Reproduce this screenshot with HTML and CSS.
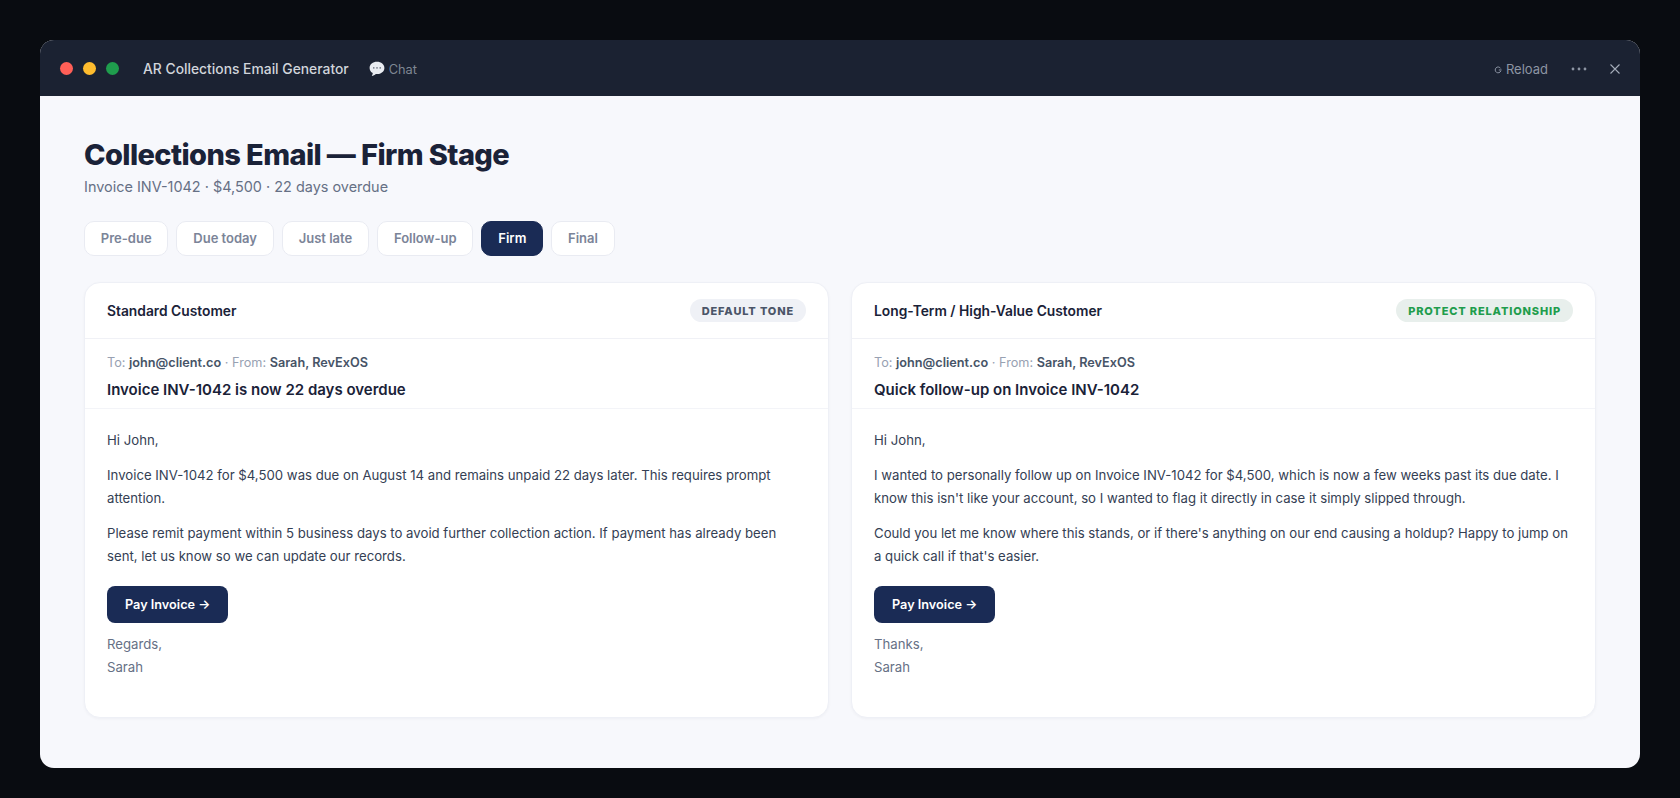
FILE: index.html
```html
<!DOCTYPE html>
<html lang="en">
<head>
<meta charset="utf-8">
<title>AR Collections Email Generator</title>
<link rel="stylesheet" href="styles.css">
</head>
<body>
<div class="window">
  <header class="titlebar">
    <div class="lights"><span class="light red"></span><span class="light yellow"></span><span class="light green"></span></div>
    <span class="app-title">AR Collections Email Generator</span>
    <span class="chat">
      <svg class="chat-icon" viewBox="0 0 16 16" aria-hidden="true"><path d="M8 .8C3.8.8.6 3.3.6 6.900c0 2.200 1.200 4 3.200 5.100-.1 1-.5 2.100-1 2.900 1.500-.2 3-1 4-2 .4.100.8.100 1.200.100 4.200 0 7.400-2.600 7.400-6.100S12.200.8 8 .8z" fill="#e9ecf1"/><circle cx="4.800" cy="6.900" r=".8" fill="#6b7280"/><circle cx="8" cy="6.900" r=".8" fill="#6b7280"/><circle cx="11.200" cy="6.900" r=".8" fill="#6b7280"/></svg>
      Chat
    </span>
    <div class="bar-actions">
      <span class="reload">
        <svg class="reload-icon" viewBox="0 0 8 8" aria-hidden="true"><path d="M6.600 2.400A2.900 2.900 0 1 0 6.800 5" fill="none" stroke="#9aa3b2" stroke-width=".9"/><path d="M4.800 4h2.800" stroke="#9aa3b2" stroke-width=".9"/></svg>
        Reload
      </span>
      <svg class="more-icon" viewBox="0 0 16 4" aria-hidden="true"><circle cx="2" cy="2" r="1.400"/><circle cx="8" cy="2" r="1.400"/><circle cx="14" cy="2" r="1.400"/></svg>
      <svg class="close-icon" viewBox="0 0 10 10" aria-hidden="true"><path d="M.5.500l9 9M9.500.500l-9 9"/></svg>
    </div>
  </header>
  <main class="content">
    <h1 class="page-title">Collections Email — Firm Stage</h1>
    <p class="page-sub">Invoice INV-1042 · $4,500 · 22 days overdue</p>
    <nav class="tabs">
      <button class="tab">Pre-due</button>
      <button class="tab">Due today</button>
      <button class="tab">Just late</button>
      <button class="tab">Follow-up</button>
      <button class="tab active">Firm</button>
      <button class="tab">Final</button>
    </nav>
    <section class="cards">
      <article class="card">
        <div class="card-head">
          <span class="card-title">Standard Customer</span>
          <span class="badge badge-grey">DEFAULT TONE</span>
        </div>
        <div class="meta">
          <div class="meta-line">To: <b>john@client.co</b> · From: <b>Sarah, RevExOS</b></div>
          <div class="subject">Invoice INV-1042 is now 22 days overdue</div>
        </div>
        <div class="body">
          <p>Hi John,</p>
          <p>Invoice INV-1042 for $4,500 was due on August 14 and remains unpaid 22 days later. This requires prompt attention.</p>
          <p>Please remit payment within 5 business days to avoid further collection action. If payment has already been sent, let us know so we can update our records.</p>
          <a class="pay">Pay Invoice →</a>
          <div class="sign">Regards,<br>Sarah</div>
        </div>
      </article>
      <article class="card">
        <div class="card-head">
          <span class="card-title">Long-Term / High-Value Customer</span>
          <span class="badge badge-green">PROTECT RELATIONSHIP</span>
        </div>
        <div class="meta">
          <div class="meta-line">To: <b>john@client.co</b> · From: <b>Sarah, RevExOS</b></div>
          <div class="subject">Quick follow-up on Invoice INV-1042</div>
        </div>
        <div class="body">
          <p>Hi John,</p>
          <p>I wanted to personally follow up on Invoice INV-1042 for $4,500, which is now a few weeks past its due date. I know this isn't like your account, so I wanted to flag it directly in case it simply slipped through.</p>
          <p>Could you let me know where this stands, or if there's anything on our end causing a holdup? Happy to jump on a quick call if that's easier.</p>
          <a class="pay">Pay Invoice →</a>
          <div class="sign">Thanks,<br>Sarah</div>
        </div>
      </article>
    </section>
  </main>
</div>
</body>
</html>
```
FILE: styles.css
```css
* { box-sizing: border-box; }
html, body { margin: 0; height: 100%; }
body {
  background: #090c11;
  font-family: Inter, "Liberation Sans", sans-serif;
  padding: 40px 40px 30px;
  overflow: hidden;
}
.window {
  height: 728px;
  border-radius: 14px;
  overflow: hidden;
  background: #f7f8fc;
  display: flex;
  flex-direction: column;
}
.titlebar {
  height: 56px;
  flex: none;
  background: #1b2232;
  display: flex;
  align-items: center;
  padding: 2px 20px 0;
}
.lights { display: flex; gap: 10px; margin: -2px 24px 0 0; }
.light { width: 13px; height: 13px; border-radius: 50%; }
.red { background: #ff5f57; }
.yellow { background: #febc2e; }
.green { background: #1f9d4d; }
.app-title { color: #d1d5db; font-size: 13.850px; font-weight: 500; margin-right: 20px; }
.chat { color: #7f8794; font-size: 12.800px; display: flex; align-items: center; gap: 4px; }
.chat-icon { width: 16px; height: 16px; }
.bar-actions { margin-left: auto; display: flex; align-items: center; }
.reload { color: #8d95a3; font-size: 13px; display: flex; align-items: center; gap: 4px; margin-right: 23px; }
.reload-icon { width: 8px; height: 8px; margin-top: 2px; }
.more-icon { width: 16px; height: 4px; fill: #8d95a3; margin-right: 23px; }
.close-icon { width: 10px; height: 10px; stroke: #a3abb8; stroke-width: 1.100; fill: none; }
.content { flex: 1; padding: 41px 44px 0; }
.page-title {
  margin: 0;
  font-size: 29px;
  line-height: 36px;
  font-weight: 800;
  letter-spacing: -0.6px;
  color: #1a2238;
}
.page-sub { margin: 4px 0 0; font-size: 14.450px; line-height: 20px; color: #667085; }
.tabs { display: flex; gap: 8px; margin-top: 24px; }
.tab {
  height: 35px;
  padding: 0 15.850px 1px;
  border: 1px solid #e9ebf2;
  border-radius: 10px;
  background: #fff;
  color: #7b8498;
  font: 600 13px Inter, "Liberation Sans", sans-serif;
}
.tab.active { background: #1a2b55; border-color: #1a2b55; color: #fff; }
.cards { display: grid; grid-template-columns: 1fr 1fr; gap: 22px; margin-top: 26px; }
.card {
  height: 436px;
  background: #fff;
  border: 1px solid #eef0f6;
  border-radius: 16px;
  box-shadow: 0 1px 3px rgba(20, 30, 60, 0.04);
}
.card-head {
  height: 56px;
  padding: 0 22px;
  display: flex;
  align-items: center;
  justify-content: space-between;
  border-bottom: 1px solid #f0f1f6;
}
.card-title { font-size: 13.800px; font-weight: 600; color: #1a2238; }
.badge {
  height: 23px;
  padding: 0 12px;
  border-radius: 12px;
  font-size: 11px;
  font-weight: 800;
  letter-spacing: 0.850px;
  display: flex;
  align-items: center;
}
.badge-grey { background: #eff1f6; color: #4b5568; }
.badge-green { background: #e8efec; color: #1f9d4d; }
.meta { height: 70px; padding: 15px 22px 0; border-bottom: 1px solid #f3f4f8; }
.meta-line { font-size: 12.700px; line-height: 18px; color: #98a1b2; }
.meta-line b { font-weight: 600; color: #475467; }
.subject { margin-top: 8px; font-size: 15px; line-height: 20px; font-weight: 600; color: #1a2238; }
.body { padding: 20px 22px 0; font-size: 13.200px; line-height: 23.500px; color: #344054; }
.body p { margin: 0 0 11px; }
.pay {
  display: inline-flex;
  align-items: center;
  height: 37px;
  margin-top: 6px;
  padding: 1px 18px 0;
  border-radius: 8px;
  background: #1a2b55;
  color: #fff;
  font-size: 12.700px;
  font-weight: 600;
}
.sign { margin-top: 10px; color: #667085; }
```
